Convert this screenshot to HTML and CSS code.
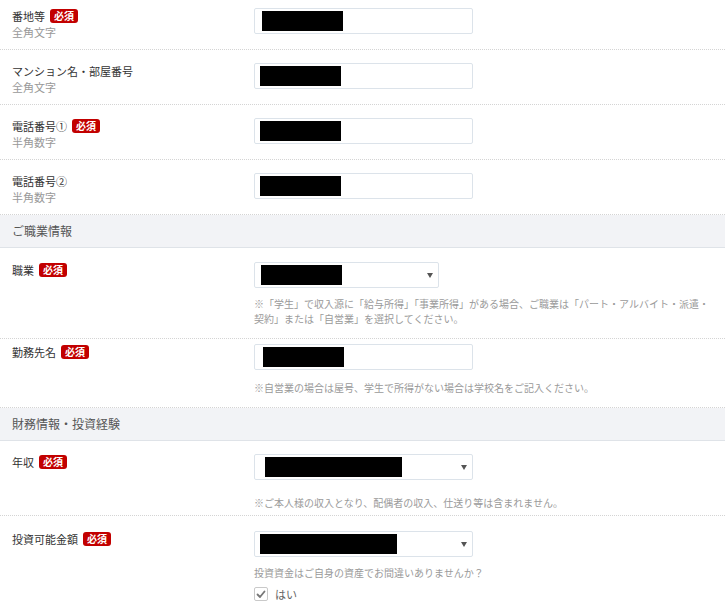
FILE: index.html
```html
<html>
<head>
<meta charset="utf-8">
<link rel="stylesheet" href="styles.css">
</head>
<body>
	<div class="form">
		<div class="row">
			<div class="label">
				<p class="name">番地等<span class="req">必須</span></p>
				<p class="sub">全角文字</p>
			</div>
			<div class="field">
				<div class="input"><span class="mask nudge2"></span></div>
			</div>
		</div>

		<div class="row">
			<div class="label">
				<p class="name">マンション名・部屋番号</p>
				<p class="sub">全角文字</p>
			</div>
			<div class="field">
				<div class="input"><span class="mask"></span></div>
			</div>
		</div>

		<div class="row">
			<div class="label">
				<p class="name">電話番号①<span class="req">必須</span></p>
				<p class="sub">半角数字</p>
			</div>
			<div class="field">
				<div class="input"><span class="mask"></span></div>
			</div>
		</div>

		<div class="row">
			<div class="label">
				<p class="name">電話番号②</p>
				<p class="sub">半角数字</p>
			</div>
			<div class="field">
				<div class="input"><span class="mask"></span></div>
			</div>
		</div>

		<div class="section">ご職業情報</div>

		<div class="row has-note">
			<div class="label">
				<p class="name">職業<span class="req">必須</span></p>
			</div>
			<div class="field">
				<div class="input select short"><span class="mask nudge1"></span><span class="arrow"></span></div>
				<p class="note">※「学生」で収入源に「給与所得」「事業所得」がある場合、ご職業は「パート・アルバイト・派遣・契約」または「自営業」を選択してください。</p>
			</div>
		</div>

		<div class="row has-note tight">
			<div class="label">
				<p class="name">勤務先名<span class="req">必須</span></p>
			</div>
			<div class="field">
				<div class="input"><span class="mask nudge3"></span></div>
				<p class="note loose">※自営業の場合は屋号、学生で所得がない場合は学校名をご記入ください。</p>
			</div>
		</div>

		<div class="section">財務情報・投資経験</div>

		<div class="row income">
			<div class="label">
				<p class="name">年収<span class="req">必須</span></p>
			</div>
			<div class="field">
				<div class="input select"><span class="mask wide nudge5"></span><span class="arrow"></span></div>
				<p class="note far">※ご本人様の収入となり、配偶者の収入、仕送り等は含まれません。</p>
			</div>
		</div>

		<div class="row invest">
			<div class="label">
				<p class="name">投資可能金額<span class="req">必須</span></p>
			</div>
			<div class="field">
				<div class="input select"><span class="mask wide"></span><span class="arrow"></span></div>
				<p class="note">投資資金はご自身の資産でお間違いありませんか？</p>
				<label class="check">
					<span class="box">
						<svg width="12" height="12" viewBox="0 0 12 12"><polyline points="2.5,6.5 5,9 9.5,3.5" fill="none" stroke="#777" stroke-width="1.8" stroke-linecap="round" stroke-linejoin="round"/></svg>
					</span>
					はい
				</label>
			</div>
		</div>
	</div>
</body>
</html>
```

FILE: styles.css
```css
body {
	margin: 0;
	font-family: "Noto Sans CJK JP", "Noto Sans", sans-serif;
	color: #333;
	background: #fff;
}

.form {
	margin-top: -5px; /* page is scrolled a little */
}

.row {
	display: flex;
	padding: 13px 0 9px;
	border-bottom: 1px dotted #d4d4d4;
}

.row.has-note {
	padding-top: 14px;
	padding-bottom: 12px;
}

.row.tight {
	padding-top: 5px;
}

.row.income {
	padding-top: 13px;
	padding-bottom: 5px;
}

.row.invest {
	padding-top: 15px;
	border-bottom: none;
}

.label {
	width: 242px;
	padding-left: 12px;
	flex-shrink: 0;
}

.name {
	margin: 0;
	font-size: 11px;
	line-height: 16px;
	display: flex;
	align-items: center;
}

.req {
	margin-left: 5px;
	padding: 0 4px;
	height: 14px;
	line-height: 14px;
	font-size: 10px;
	font-weight: bold;
	color: #fff;
	background-color: #c20000;
	border-radius: 3px;
}

.sub {
	margin: 0;
	font-size: 11px;
	line-height: 16px;
	color: #999;
}

.field {
	width: 461px;
}

.input {
	display: flex;
	align-items: center;
	width: 219px;
	height: 26px;
	box-sizing: border-box;
	border: 1px solid #dce3ea;
	border-radius: 2px;
	padding-left: 5px;
	background: #fff;
}

.select {
	justify-content: space-between;
	padding-right: 5px;
}

.select.short {
	width: 185px;
}

.mask {
	width: 81px;
	height: 20px;
	background: #000;
}

.mask.wide {
	width: 137px;
}

.nudge1 { margin-left: 1px; }
.nudge2 { margin-left: 2px; }
.nudge3 { margin-left: 3px; }
.nudge5 { margin-left: 5px; }

.arrow {
	width: 0;
	height: 0;
	border-left: 3px solid transparent;
	border-right: 3px solid transparent;
	border-top: 5px solid #555;
}

.note {
	margin: 8px 0 0;
	font-size: 10px;
	line-height: 15px;
	color: #9a9a9a;
}

.note.loose {
	margin-top: 10px;
}

.note.far {
	margin-top: 15px;
}

.section {
	height: 32px;
	padding-left: 12px;
	font-size: 12px;
	line-height: 32px;
	color: #555;
	background-color: #f2f3f6;
	border-bottom: 1px solid #dfe3e8;
}

.check {
	display: flex;
	align-items: center;
	margin-top: 7px;
	font-size: 11px;
	line-height: 14px;
	color: #666;
}

.box {
	display: flex;
	align-items: center;
	justify-content: center;
	width: 14px;
	height: 14px;
	box-sizing: border-box;
	border: 1px solid #c9c9c9;
	border-radius: 2px;
	margin-right: 7px;
}
```
